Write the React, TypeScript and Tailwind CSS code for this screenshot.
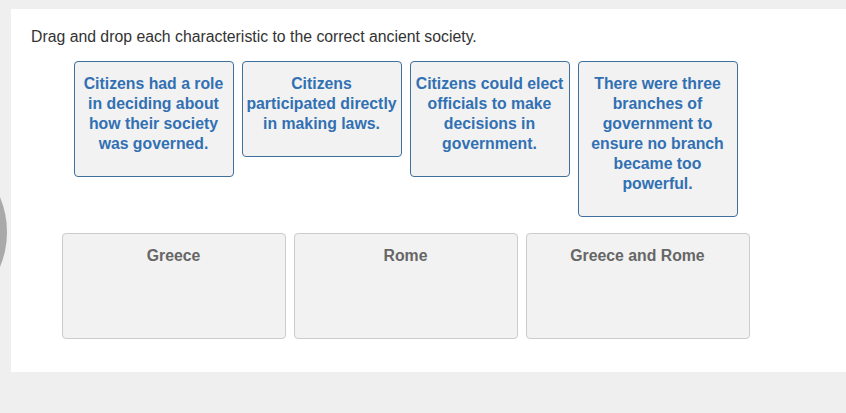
import React from 'react';

const cards = [
  'Citizens had a role in deciding about how their society was governed.',
  'Citizens participated directly in making laws.',
  'Citizens could elect officials to make decisions in government.',
  'There were three branches of government to ensure no branch became too powerful.',
];

const zones = ['Greece', 'Rome', 'Greece and Rome'];

export default function App() {
  return (
    <div
      className="relative w-[846px] h-[413px] overflow-hidden bg-[#efefef] pt-[9px] pl-[11px]"
      style={{ fontFamily: '"Liberation Sans", Arial, sans-serif' }}
    >
      {/* partial gray circle at the left edge */}
      <div className="absolute left-[-175px] top-[141px] w-[182px] h-[182px] rounded-full bg-[#a9a9a9]" />

      <div className="relative bg-white w-[835px] h-[363px] pl-5 pt-[18px]">
        <p className="text-[15.8px] leading-5 text-[#333]">
          Drag and drop each characteristic to the correct ancient society.
        </p>

        <div className="w-[749px] mt-[14px]">
          <div className="flex justify-center items-start gap-2">
            {cards.map((c) => (
              <div
                key={c}
                className="w-[160px] rounded bg-[#f2f2f2] border border-[#3f6f9c] px-[2px] pt-[12px] pb-[22px] text-center text-[15.8px] leading-5 font-bold text-[#3170b2]"
              >
                {c}
              </div>
            ))}
          </div>

          <div className="flex justify-center gap-2 mt-[16px]">
            {zones.map((z) => (
              <div
                key={z}
                className="w-[224px] h-[106px] rounded bg-[#f2f2f2] border border-[#cccccc] pt-[12px] text-center text-[15.8px] leading-5 font-bold text-[#666]"
              >
                {z}
              </div>
            ))}
          </div>
        </div>
      </div>
    </div>
  );
}
